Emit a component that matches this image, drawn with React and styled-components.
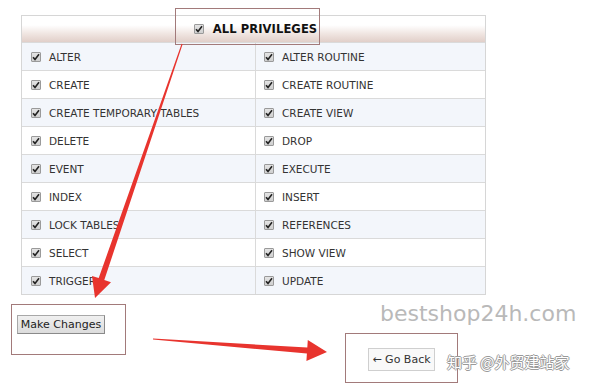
import React from "react";
import styled, { createGlobalStyle } from "styled-components";

const GlobalStyle = createGlobalStyle`
  html, body {
    margin: 0;
    padding: 0;
    background: #ffffff;
  }
  body {
    font-family: "DejaVu Sans", Verdana, sans-serif;
    color: #2b2b2b;
  }
`;

const LEFT = [
  "ALTER",
  "CREATE",
  "CREATE TEMPORARY TABLES",
  "DELETE",
  "EVENT",
  "INDEX",
  "LOCK TABLES",
  "SELECT",
  "TRIGGER",
];
const RIGHT = [
  "ALTER ROUTINE",
  "CREATE ROUTINE",
  "CREATE VIEW",
  "DROP",
  "EXECUTE",
  "INSERT",
  "REFERENCES",
  "SHOW VIEW",
  "UPDATE",
];

const Check = () => (
  <CheckBox>
    <svg width="8" height="8" viewBox="0 0 8 8">
      <path d="M1 4.2 L3 6.4 L7 1.2" fill="none" stroke="#222" strokeWidth="1.6" />
    </svg>
  </CheckBox>
);

const App = () => {
  return (
    <Page>
      <GlobalStyle />
      <Panel>
        <Header>
          <Check />
          <HeaderLabel>ALL PRIVILEGES</HeaderLabel>
        </Header>
        {LEFT.map((name, i) => (
          <Row key={name} $alt={i % 2 === 0}>
            <Cell>
              <Check />
              <span>{name}</span>
            </Cell>
            <Cell $divider>
              <Check />
              <span>{RIGHT[i]}</span>
            </Cell>
          </Row>
        ))}
      </Panel>
      <MakeButton>Make Changes</MakeButton>
      <BackButton>← Go Back</BackButton>

      {/* annotations drawn over the screenshot */}
      <Mark $x={175} $y={8} $w={145} $h={37} />
      <Mark $x={11} $y={304} $w={115} $h={51} />
      <Mark $x={345} $y={333} $w={113} $h={50} />
      <Arrows width="600" height="389" viewBox="0 0 600 389">
        <polygon
          fill="#e8342e"
          points="182.6,44.2 104.3,280.1 111,282.3 95,298 92,275.9 98.7,278.1 181.6,43.8"
        />
        <polygon
          fill="#e8342e"
          points="153,339.6 306.9,353.5 306.4,361 327,352 307.8,340 307.3,347.5 153,338.6"
        />
      </Arrows>
      <SiteMark>bestshop24h.com</SiteMark>
      <ZhMark>知乎 @外贸建站家</ZhMark>
    </Page>
  );
};

const Page = styled.div`
  position: relative;
  width: 600px;
  height: 389px;
  padding-top: 15px;
  box-sizing: border-box;
  overflow: hidden;
`;

const Panel = styled.div`
  width: 465px;
  margin-left: 21px;
  border: 1px solid #d6d6d6;
  box-sizing: border-box;
`;

const Header = styled.div`
  height: 26px;
  display: flex;
  align-items: center;
  justify-content: center;
  gap: 9px;
  padding-left: 4px;
  background: linear-gradient(
    to bottom,
    #ffffff 0%,
    #ffffff 35%,
    #efe4e0 70%,
    #e1cfc9 100%
  );
`;

const HeaderLabel = styled.span`
  font-weight: bold;
  font-size: 11.5px;
  color: #111;
  letter-spacing: 0.1px;
`;

const Row = styled.div`
  display: grid;
  grid-template-columns: 233px 1fr;
  height: 28px;
  box-sizing: border-box;
  border-top: 1px solid #dadada;
  background: ${(p) => (p.$alt ? "#f3f6fb" : "#ffffff")};
`;

const Cell = styled.div`
  display: flex;
  align-items: center;
  gap: 8px;
  padding-left: ${(p) => (p.$divider ? "8px" : "9px")};
  border-left: ${(p) => (p.$divider ? "1px solid #dadada" : "none")};
  font-size: 10.5px;
  color: #333;
`;

const CheckBox = styled.span`
  width: 10px;
  height: 10px;
  box-sizing: border-box;
  border: 1px solid #9a9a9a;
  border-radius: 1px;
  background: linear-gradient(to bottom, #e4e4e4, #cfcfcf);
  display: flex;
  align-items: center;
  justify-content: center;
  flex-shrink: 0;
`;

const BaseButton = styled.div`
  display: flex;
  align-items: center;
  justify-content: center;
  box-sizing: border-box;
  font-size: 11px;
  color: #222;
`;

const MakeButton = styled(BaseButton)`
  width: 88px;
  height: 19px;
  margin: 20px 0 0 17px;
  border: 1px solid #a8a8a8;
  border-right-color: #8a8a8a;
  border-bottom-color: #8a8a8a;
  background: linear-gradient(to bottom, #f0f0f0, #dcdcdc);
`;

const BackButton = styled(BaseButton)`
  width: 67px;
  height: 23px;
  margin: 14px 0 0 368px;
  border: 1px solid #cfcfcf;
  background: #f9f9f9;
  color: #333;
`;

const Mark = styled.div`
  position: absolute;
  left: ${(p) => p.$x}px;
  top: ${(p) => p.$y}px;
  width: ${(p) => p.$w}px;
  height: ${(p) => p.$h}px;
  box-sizing: border-box;
  border: 1px solid #a27a7a;
  pointer-events: none;
`;

const Arrows = styled.svg`
  position: absolute;
  left: 0;
  top: 0;
  pointer-events: none;
`;

const SiteMark = styled.div`
  position: absolute;
  left: 380px;
  top: 301px;
  font-size: 22px;
  color: #b9b9b9;
  font-family: "DejaVu Sans", Verdana, sans-serif;
`;

const ZhMark = styled.div`
  position: absolute;
  left: 447px;
  top: 351px;
  font-size: 15px;
  color: #ffffff;
  font-family: "Noto Sans CJK SC", sans-serif;
  text-shadow: 1px 0 0 #9a9a9a, -1px 0 0 #9a9a9a, 0 1px 0 #9a9a9a, 0 -1px 0 #9a9a9a;
  white-space: nowrap;
`;

export default App;
